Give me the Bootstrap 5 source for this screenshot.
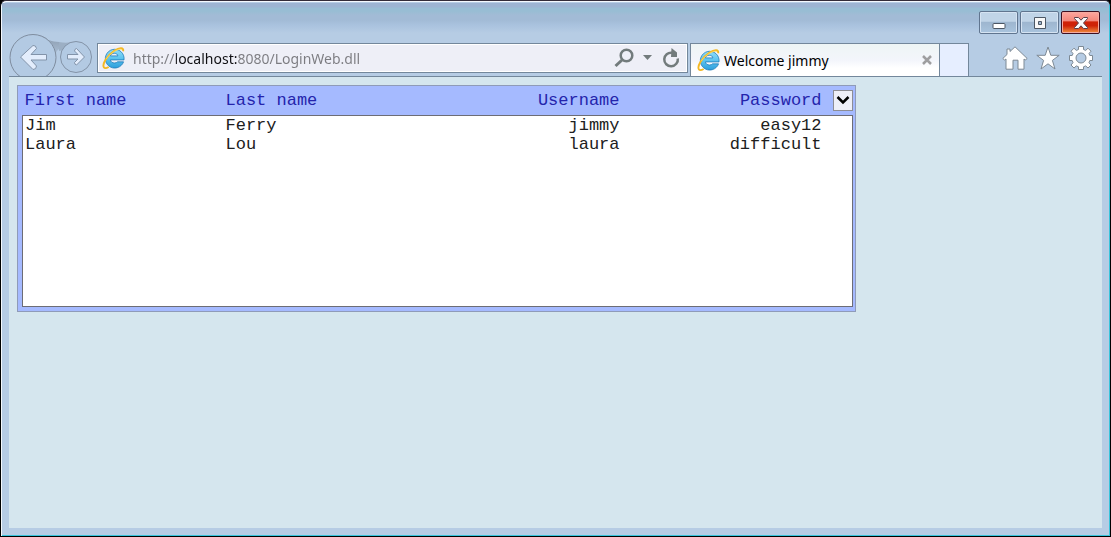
<!DOCTYPE html>
<html lang="en">
<head>
<meta charset="utf-8">
<meta name="viewport" content="width=device-width, initial-scale=1">
<title>Welcome jimmy</title>
<link href="https://cdn.jsdelivr.net/npm/bootstrap@5.3.0/dist/css/bootstrap.min.css" rel="stylesheet">
<style>
  body { background: #000; font-family: "Noto Sans", "Open Sans", sans-serif; font-size: 14px; }
  .window {
    background: #b6cce4; border: 1px solid; border-color: #332c38 #000 #000; border-radius: 6px 6px 0 0;
    box-shadow: inset 1px 1px #f4f8fd, inset -1px -1px #38c4dc; padding: 2px 8px 8px;
  }
  .frame-top { background: linear-gradient(#9db4d2 0 4px, #98bdd4 5px 8px, #a2bbd6 12px 17px, #a9c2de 22px, #b6cce4 30px); margin: 0 -7px; padding: 8px 9px 0 0; height: 31px; }
  .win-buttons { gap: 2px; }
  .win-btn { width: 39px; height: 23px; border: 1px solid #60758f; border-radius: 2px; padding: 0; box-shadow: inset 0 0 0 1px #d5e3f2; background: linear-gradient(#c0d4e7 0 45%, #9db5ce 46%, #a9c4de); }
  .win-close { border-color: #3f1020; box-shadow: inset 0 0 0 1px #f4aaa0; background: linear-gradient(#fda79f, #f38578 44%, #cf2207 46% 65%, #f09040); }
  .win-btn svg, .tool svg, .go svg, .addr svg, .tab-item svg, .pick svg { display: block; margin: auto; }
  .toolbar-row { height: 43px; border-bottom: 1px solid #73879b; }
  .go { background: none; border: 0; padding: 0; }
  .addr { height: 30px; margin: 0 2px 3px 5px; background: #eeeff7; border: 1px solid #73879b; box-shadow: inset 0 0 0 1px #fff; padding: 0 6px 0 4px; }
  .addr input {
    border: 0; outline: 0; padding: 0; margin-left: 8px; min-width: 0; height: 26px;
    -webkit-text-fill-color: transparent;
    background: linear-gradient(90deg, #7b7b80 43px, #101014 43px 104px, #7b7b80 104px); -webkit-background-clip: text; background-clip: text;
  }
  .tool { background: none; border: 0; padding: 0; }
  .tab-item { width: 250px; height: 33px; border: 1px solid #73879b; border-bottom: 0; background: linear-gradient(#eef5f5, #f3f5fb 50%, #fff 75%); padding: 0 6px; }
  .tab-new { width: 29px; height: 33px; border: 1px solid #73879b; border-width: 1px 1px 0 0; background: #e6eeff; padding: 0; }
  .tools { margin-bottom: 6px; padding: 0 8px 0 33px; }
  .page { background: #d5e6ee; padding: 8px; }
  .panel { width: 100%; max-width: 839px; background: #a5baff; border: 1px solid #8f9bb8; padding: 0 4px 4px; }
  .grid { width: 100%; height: 221px; table-layout: fixed; border-collapse: collapse; font-family: "Liberation Mono", monospace; font-size: 17px; line-height: 19px; color: #202020; }
  .grid th { height: 29px; font-weight: 400; color: #2424ac; padding: 0 2px; }
  .grid td { height: 19px; padding: 0 2px; }
  .grid tbody { background: #fff; border: 1px solid #6d6d75; }
  .grid tbody tr:last-child td { height: auto; }
  .col-name { width: 201px; }
  .col-last, .col-user { width: 199px; }
  .col-pass { width: 202px; }
  .col-pick { width: 29px; }
  .pick { display: block; margin-left: auto; width: 20px; height: 21px; padding: 0; border: 1px solid #8d8d95; background: #eeeff8; }
</style>
</head>
<body>
<svg width="0" height="0" class="position-absolute" aria-hidden="true">
  <defs>
    <linearGradient id="blue" x1="0" y1="0" x2="0" y2="1"><stop offset="0" stop-color="#8fdcf8"/><stop offset=".5" stop-color="#5cc3ef"/><stop offset="1" stop-color="#2d9edb"/></linearGradient>
    <symbol id="globe" viewBox="0 0 24 24">
      <path d="M22.500 16A9.800 9.800 0 1 1 23 11.500v2.500H8.800c.3 2 2 3.200 4.200 3.200 1.500 0 2.600-.4 3.200-1.200zM8.800 9.800h7.700c-.2-1.800-1.700-2.700-3.700-2.700-2.100 0-3.600.9-4 2.700z" fill="url(#blue)" stroke="#1a78b8" stroke-width=".8"/>
      <path d="M22 5C23 1 18.500.7 12.800 4.500 4.500 10 0 19 2 21.800c.9 1.200 3 .7 5-.4" fill="none" stroke="#f3b824" stroke-width="2"/>
      <path d="M21 3.300C18 1.500 9 6 4.500 13" fill="none" stroke="#ffe373" stroke-width=".7"/>
    </symbol>
  </defs>
</svg>
<div class="window min-vh-100 d-flex flex-column">
  <header>
    <div class="frame-top d-flex justify-content-end align-items-start">
      <div class="win-buttons d-flex">
        <button class="win-btn" type="button" aria-label="Minimize"><svg width="14" height="17" viewBox="0 0 14 17"><rect x="1" y="9.500" width="12" height="5" rx="1" fill="#fff" stroke="#4c5764"/></svg></button>
        <button class="win-btn" type="button" aria-label="Maximize"><svg width="14" height="14" viewBox="0 0 14 14"><path d="M1.500 1.500h11v11h-11zM5.500 5.500v3h3v-3z" fill="#f8f8f8" fill-rule="evenodd" stroke="#4c5764"/></svg></button>
        <button class="win-btn win-close" type="button" aria-label="Close"><svg width="16" height="14" viewBox="0 0 16 14"><path d="M1.500 1.500h4L8 4.200l2.500-2.700h4v1L10.500 7l4 4.500v1h-4L8 9.800l-2.500 2.700h-4v-1l4-4.500-4-4.500z" fill="#fafafa" stroke="#58404a"/></svg></button>
      </div>
    </div>
    <div class="toolbar-row d-flex align-items-end overflow-hidden">
      <nav class="go d-flex flex-shrink-0" aria-label="History">
        <button class="go" type="button" aria-label="Back"><svg width="50" height="42" viewBox="0 0 50 42">
          <defs><linearGradient id="neck" x1="0" y1="0" x2="0" y2="1"><stop offset="0" stop-color="#8999ac"/><stop offset="1" stop-color="#a9bdd3"/></linearGradient></defs>
          <path d="M30 1c8 5 13 6.500 20 7v7q-3 2-3.500 5C45 10 40 4 30 1" fill="url(#neck)"/>
          <circle cx="24" cy="23.500" r="23" fill="#b3cae3" stroke="#7f8d9f"/>
          <path d="M11.500 23 24 11.500q3-.5 3.500 3L22 20.500h15.500v5.500H22l5.500 6q0 3.500-3.500 3.500z" fill="#e3edfc" stroke="#8293a9"/></svg></button>
        <button class="go" type="button" aria-label="Forward"><svg width="33" height="42" viewBox="0 0 33 42">
          <path d="M0 8q8 1.500 16-.5L4 16l-4 1z" fill="#9cafc4"/>
          <circle cx="17" cy="23" r="15.500" fill="#b3cae3" stroke="#8393a7"/>
          <path d="m25.500 23-8 8q-2-.5-2-2.500l3.500-3.500H8.500v-4.500H19L15.500 17q0-2 2-2.500z" fill="#e3edfc" stroke="#8293a9"/></svg></button>
      </nav>
      <div class="addr d-flex align-items-center flex-fill">
        <svg class="flex-shrink-0 m-0" width="23" height="24"><use href="#globe"/></svg>
        <input class="flex-fill" type="text" aria-label="Address" value="http://localhost:8080/LoginWeb.dll">
        <button class="tool" type="button" aria-label="Search"><svg width="20" height="20" viewBox="0 0 20 20" fill="none" stroke="#727b7c"><circle cx="12.500" cy="7.500" r="5.800" stroke-width="2.500"/><path d="m8 12-6.500 6" stroke-width="3"/></svg></button>
        <button class="tool mx-2" type="button" aria-label="Show addresses"><svg width="11" height="6"><path d="M1 0h9L5.500 5z" fill="#727b7c"/></svg></button>
        <button class="tool" type="button" aria-label="Refresh"><svg width="20" height="20" viewBox="0 0 20 20"><path d="M16.800 10.500A6.800 6.800 0 1 1 11 4.700" fill="none" stroke="#727b7c" stroke-width="2.500"/><path d="M10.500 0 16 4.500V9H10z" fill="#727b7c"/></svg></button>
      </div>
      <div class="tab-item d-flex align-items-center flex-shrink-0">
        <svg class="m-0" width="23" height="24"><use href="#globe"/></svg>
        <a class="text-black text-decoration-none ms-1 me-auto" href="#">Welcome jimmy</a>
        <button class="tool" type="button" aria-label="Close tab"><svg width="12" height="12" viewBox="0 0 12 12"><path d="m2 2 8 8M10 2l-8 8" stroke="#9e9ea0" stroke-width="2.500"/></svg></button>
      </div>
      <button class="tab-new flex-shrink-0" type="button" aria-label="New tab"></button>
      <div class="tools d-flex align-items-center gap-2 ms-auto flex-shrink-0">
        <button class="tool" type="button" aria-label="Home"><svg width="26" height="24" viewBox="0 0 26 24"><path d="M13 .8 25.200 12.500l-2 1.500L22 13v10.200h-6v-9h-5v9H4V13l-1.500 1-1.700-1.500L5 8.500V3h3v2.500z" fill="#fff" stroke="#7d8994"/></svg></button>
        <button class="tool" type="button" aria-label="Favorites"><svg width="24" height="24" viewBox="0 0 24 24"><path d="m12 1 2.800 8.300h8.400l-6.800 5.100 2.600 8.600-7-5.200L5 23l2.600-8.600L.8 9.300h8.400z" fill="#fff" stroke="#7d8994"/></svg></button>
        <button class="tool" type="button" aria-label="Tools"><svg width="26" height="24" viewBox="-13 -12 26 24"><path fill="#fff" fill-rule="evenodd" stroke="#7d8994" d="M-2.500-8.500V-11.500h5v3l2.200.9 2.300-2.200 3 3-2 2.300.8 2h2.700v5H8.800L8 4.700l2 2.300-3 3-2.300-2.100-2.200.9v2.700h-5V8.800l-2.200-.9L-7 10l-3-3 2-2.300-.8-2.200h-2.700v-5h2.700l.8-2-2-2.300 3-3 2.300 2.200zM5 0A5 5 0 1 0-5 0 5 5 0 1 0 5 0z"/></svg></button>
      </div>
    </div>
  </header>
  <main class="page flex-fill">
    <div class="panel">
      <table class="grid">
        <colgroup><col class="col-name"><col class="col-last"><col class="col-user"><col class="col-pass"><col class="col-pick"></colgroup>
        <thead>
          <tr><th scope="col">First name</th><th scope="col">Last name</th><th scope="col" class="text-end">Username</th><th scope="col" class="text-end">Password</th>
          <th class="pe-0"><button class="pick" type="button" aria-label="Choose columns"><svg width="16" height="11" viewBox="0 0 16 11"><path d="m2.500 2 5.500 5.500L13.500 2" fill="none" stroke="#000" stroke-width="2.500"/></svg></button></th></tr>
        </thead>
        <tbody>
          <tr><td>Jim</td><td>Ferry</td><td class="text-end">jimmy</td><td class="text-end">easy12</td><td></td></tr>
          <tr><td>Laura</td><td>Lou</td><td class="text-end">laura</td><td class="text-end">difficult</td><td></td></tr>
          <tr><td colspan="5"></td></tr>
        </tbody>
      </table>
    </div>
  </main>
</div>
<script src="https://cdn.jsdelivr.net/npm/bootstrap@5.3.0/dist/js/bootstrap.bundle.min.js"></script>
</body>
</html>
